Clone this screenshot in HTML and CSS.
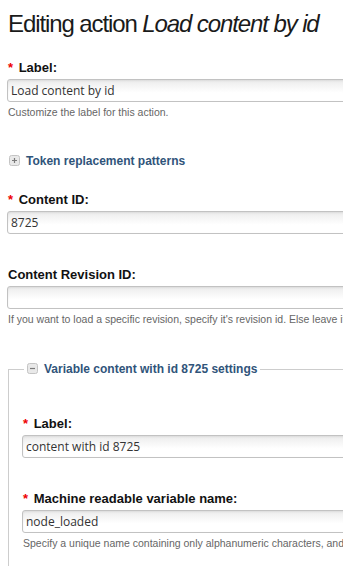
FILE: index.html
```html
<!DOCTYPE html>
<html lang="en">
<head>
    <meta charset="UTF-8">
    <meta name="viewport" content="width=device-width, initial-scale=1.0">
    <title>Editing action</title>
    <link rel="stylesheet" href="styles.css">
</head>
<body>
    <div class="page">
        <h1 class="page-title">Editing action <em>Load content by id</em></h1>

        <form class="action-form">
            <div class="form-item">
                <label class="form-label"><span class="form-required">*</span> Label:</label>
                <input class="form-text" type="text" value="Load content by id">
                <div class="description">Customize the label for this action.</div>
            </div>

            <div class="token-help">
                <a class="toggle" href="#">
                    <svg class="toggle-icon" width="11" height="11" viewBox="0 0 11 11">
                        <rect x="0.5" y="0.5" width="10" height="10" rx="2" fill="#e9e9e9" stroke="#c4c4c4"/>
                        <path d="M3 5.5h5M5.5 3v5" stroke="#7a7a7a" stroke-width="1.2"/>
                    </svg>Token replacement patterns</a>
            </div>

            <div class="form-item">
                <label class="form-label"><span class="form-required">*</span> Content ID:</label>
                <input class="form-text" type="text" value="8725">
            </div>

            <div class="form-item">
                <label class="form-label">Content Revision ID:</label>
                <input class="form-text" type="text" value="">
                <div class="description">If you want to load a specific revision, specify it's revision id. Else leave it empty to load the current revision.</div>
            </div>

            <fieldset class="settings">
                <legend>
                    <a class="toggle" href="#">
                        <svg class="toggle-icon" width="11" height="11" viewBox="0 0 11 11">
                            <rect x="0.5" y="0.5" width="10" height="10" rx="2" fill="#e9e9e9" stroke="#c4c4c4"/>
                            <path d="M3 5.5h5" stroke="#7a7a7a" stroke-width="1.2"/>
                        </svg>Variable content with id 8725 settings</a>
                </legend>

                <div class="form-item">
                    <label class="form-label"><span class="form-required">*</span> Label:</label>
                    <input class="form-text" type="text" value="content with id 8725">
                </div>

                <div class="form-item">
                    <label class="form-label"><span class="form-required">*</span> Machine readable variable name:</label>
                    <input class="form-text" type="text" value="node_loaded">
                    <div class="description">Specify a unique name containing only alphanumeric characters, and underscores.</div>
                </div>
            </fieldset>
        </form>
    </div>
</body>
</html>
```

FILE: styles.css
```css
html, body {
    overflow: hidden;
}
body {
    margin: 0;
    background: #fff;
    font-family: "Liberation Sans", Arial, sans-serif;
    color: #222;
}
.page {
    width: 600px;
    padding: 0 0 0 8px;
}
.page-title {
    margin: 9px 0 21px;
    font-size: 24px;
    line-height: 30px;
    font-weight: normal;
    letter-spacing: -1.1px;
    color: #1a1a1a;
    white-space: nowrap;
}
.page-title em {
    font-style: italic;
}
.form-item {
    margin: 0 0 33px;
}
.form-label {
    display: block;
    margin: 0 0 3px;
    font-size: 13px;
    line-height: 16px;
    font-weight: bold;
    color: #111;
}
.form-required {
    color: #e00;
    margin-right: 2px;
}
.form-text {
    display: block;
    box-sizing: border-box;
    width: 100%;
    height: 23px;
    margin: 0 0 0 -1px;
    padding: 0 3px;
    border: 1px solid #c2c2c2;
    border-radius: 3px;
    background: linear-gradient(#ececec, #fff 60%);
    box-shadow: inset 0 1px 2px rgba(0,0,0,0.08);
    font-family: "Open Sans", "Noto Sans", sans-serif;
    font-size: 12px;
    color: #333;
}
.description {
    margin: 3px 0 0;
    font-size: 10.5px;
    line-height: 14px;
    color: #666;
    white-space: nowrap;
}
.token-help {
    margin: 0 0 22px;
    padding: 0 0 0 1px;
}
.toggle {
    display: inline-flex;
    align-items: center;
    font-size: 12px;
    line-height: 16px;
    font-weight: bold;
    color: #30547a;
    text-decoration: none;
}
.toggle-icon {
    margin-right: 6px;
}
.settings {
    margin: 34px 0 0;
    padding: 38px 0 0 14px;
    border: 1px solid #cdcdcd;
    border-right: none;
    border-bottom: none;
}
.settings legend {
    margin-left: 1px;
    padding: 0 3px;
}
```
